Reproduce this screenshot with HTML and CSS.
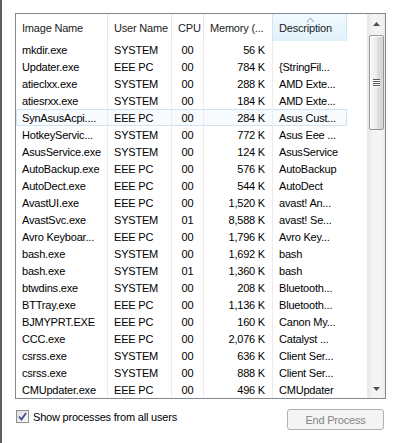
FILE: index.html
```html
<!DOCTYPE html>
<html lang="en">
<head>
    <meta charset="UTF-8">
    <title>Processes</title>
    <link rel="stylesheet" href="styles.css">
</head>
<body>

<div class="frame">
    <div class="list">
        <div class="table">
            <div class="head">
                <div class="hcell">Image Name</div>
                <div class="hcell">User Name</div>
                <div class="hcell">CPU</div>
                <div class="hcell">Memory (...</div>
                <div class="hcell sorted">
                    <svg class="sort-arrow" width="7" height="4" viewBox="0 0 7 4"><path d="M0 4 L3.5 0 L7 4" fill="none" stroke="#8c9bb0" stroke-width="1"/></svg>
                    Description
                </div>
                <div class="hcell filler"></div>
            </div>
            <div class="rows">
                <div class="row"><div class="cell">mkdir.exe</div><div class="cell">SYSTEM</div><div class="cell cpu">00</div><div class="cell mem">56 K</div><div class="cell"></div></div>
                <div class="row"><div class="cell">Updater.exe</div><div class="cell">EEE PC</div><div class="cell cpu">00</div><div class="cell mem">784 K</div><div class="cell">{StringFil...</div></div>
                <div class="row"><div class="cell">atieclxx.exe</div><div class="cell">SYSTEM</div><div class="cell cpu">00</div><div class="cell mem">288 K</div><div class="cell">AMD Exte...</div></div>
                <div class="row"><div class="cell">atiesrxx.exe</div><div class="cell">SYSTEM</div><div class="cell cpu">00</div><div class="cell mem">184 K</div><div class="cell">AMD Exte...</div></div>
                <div class="row selected"><div class="cell">SynAsusAcpi....</div><div class="cell">EEE PC</div><div class="cell cpu">00</div><div class="cell mem">284 K</div><div class="cell">Asus Cust...</div></div>
                <div class="row"><div class="cell">HotkeyServic...</div><div class="cell">SYSTEM</div><div class="cell cpu">00</div><div class="cell mem">772 K</div><div class="cell">Asus Eee ...</div></div>
                <div class="row"><div class="cell">AsusService.exe</div><div class="cell">SYSTEM</div><div class="cell cpu">00</div><div class="cell mem">124 K</div><div class="cell">AsusService</div></div>
                <div class="row"><div class="cell">AutoBackup.exe</div><div class="cell">EEE PC</div><div class="cell cpu">00</div><div class="cell mem">576 K</div><div class="cell">AutoBackup</div></div>
                <div class="row"><div class="cell">AutoDect.exe</div><div class="cell">EEE PC</div><div class="cell cpu">00</div><div class="cell mem">544 K</div><div class="cell">AutoDect</div></div>
                <div class="row"><div class="cell">AvastUI.exe</div><div class="cell">EEE PC</div><div class="cell cpu">00</div><div class="cell mem">1,520 K</div><div class="cell">avast! An...</div></div>
                <div class="row"><div class="cell">AvastSvc.exe</div><div class="cell">SYSTEM</div><div class="cell cpu">01</div><div class="cell mem">8,588 K</div><div class="cell">avast! Se...</div></div>
                <div class="row"><div class="cell">Avro Keyboar...</div><div class="cell">EEE PC</div><div class="cell cpu">00</div><div class="cell mem">1,796 K</div><div class="cell">Avro Key...</div></div>
                <div class="row"><div class="cell">bash.exe</div><div class="cell">SYSTEM</div><div class="cell cpu">00</div><div class="cell mem">1,692 K</div><div class="cell">bash</div></div>
                <div class="row"><div class="cell">bash.exe</div><div class="cell">SYSTEM</div><div class="cell cpu">01</div><div class="cell mem">1,360 K</div><div class="cell">bash</div></div>
                <div class="row"><div class="cell">btwdins.exe</div><div class="cell">SYSTEM</div><div class="cell cpu">00</div><div class="cell mem">208 K</div><div class="cell">Bluetooth...</div></div>
                <div class="row"><div class="cell">BTTray.exe</div><div class="cell">EEE PC</div><div class="cell cpu">00</div><div class="cell mem">1,136 K</div><div class="cell">Bluetooth...</div></div>
                <div class="row"><div class="cell">BJMYPRT.EXE</div><div class="cell">EEE PC</div><div class="cell cpu">00</div><div class="cell mem">160 K</div><div class="cell">Canon My...</div></div>
                <div class="row"><div class="cell">CCC.exe</div><div class="cell">EEE PC</div><div class="cell cpu">00</div><div class="cell mem">2,076 K</div><div class="cell">Catalyst ...</div></div>
                <div class="row"><div class="cell">csrss.exe</div><div class="cell">SYSTEM</div><div class="cell cpu">00</div><div class="cell mem">636 K</div><div class="cell">Client Ser...</div></div>
                <div class="row"><div class="cell">csrss.exe</div><div class="cell">SYSTEM</div><div class="cell cpu">00</div><div class="cell mem">888 K</div><div class="cell">Client Ser...</div></div>
                <div class="row"><div class="cell">CMUpdater.exe</div><div class="cell">EEE PC</div><div class="cell cpu">00</div><div class="cell mem">496 K</div><div class="cell">CMUpdater</div></div>
            </div>
        </div>
        <div class="scrollbar">
            <div class="sb-button">
                <svg width="7" height="4" viewBox="0 0 7 4"><path d="M0 4 L3.5 0 L7 4 Z" fill="#505050"/></svg>
            </div>
            <div class="sb-track">
                <div class="sb-thumb">
                    <span class="grip"></span>
                    <span class="grip"></span>
                    <span class="grip"></span>
                    <span class="grip"></span>
                </div>
            </div>
            <div class="sb-button">
                <svg width="7" height="4" viewBox="0 0 7 4"><path d="M0 0 L7 0 L3.5 4 Z" fill="#505050"/></svg>
            </div>
        </div>
    </div>

    <div class="footer">
        <label class="check">
            <span class="box">
                <svg width="9" height="9" viewBox="0 0 9 9"><path d="M1 4.5 L3.5 7.5 L8 1" fill="none" stroke="#3c4f8c" stroke-width="1.8"/></svg>
            </span>
            Show processes from all users
        </label>
        <button class="end-button" disabled>End Process</button>
    </div>
</div>

</body>
</html>
```

FILE: styles.css
```css
body {
    margin: 0;
    background-color: #fff;
    font-family: "Liberation Sans", Arial, sans-serif;
    font-size: 11px;
    letter-spacing: -0.2px;
    color: #000;
}

.frame {
    height: 443px;
    box-sizing: border-box;
    border-left: 2px solid #5e5e5e;
    padding: 13px 0 0 13px;
}

.list {
    width: 371px;
    height: 386px;
    box-sizing: border-box;
    border: 1px solid #828790;
    display: flex;
}

.table {
    flex: 1;
    overflow: hidden;
}

.head, .row {
    display: grid;
    grid-template-columns: 92px 64px 32px 69px 74px;
}

.head {
    grid-template-columns: 92px 64px 32px 69px 74px 1fr;
    height: 27px;
}

.hcell {
    position: relative;
    display: flex;
    align-items: center;
    padding-left: 6px;
    border-right: 1px solid #e3e6ea;
    color: #1b1b1b;
    white-space: nowrap;
    overflow: hidden;
}

.hcell.sorted {
    background: linear-gradient(#f1f9fe, #e1f2fb);
    border-left: 1px solid #cde7f6;
    border-right: 1px solid #cde7f6;
    margin-left: -1px;
}

.hcell.filler {
    border-right: none;
}

.sort-arrow {
    position: absolute;
    top: 4px;
    left: 34px;
}

.rows {
    width: 331px;
}

.row {
    height: 17px;
}

.row.selected {
    background-color: #f7fbfe;
    box-shadow: inset 0 0 0 1px #cfe3f3;
    border-radius: 2px;
}

.cell {
    display: flex;
    align-items: center;
    padding: 0 6px;
    border-right: 1px solid #ececec;
    white-space: nowrap;
    overflow: hidden;
}

.cell:last-child {
    border-right: none;
}

.cell.cpu {
    justify-content: center;
    padding: 0;
}

.cell.mem {
    justify-content: flex-end;
    padding-right: 7px;
}

.scrollbar {
    width: 17px;
    display: flex;
    flex-direction: column;
    background: linear-gradient(to right, #e8e8e8, #f4f4f4 30%, #f4f4f4 70%, #ececec);
    border-left: 1px solid #ebebeb;
}

.sb-button {
    height: 19px;
    display: flex;
    align-items: center;
    justify-content: center;
}

.sb-track {
    flex: 1;
    padding: 2px 1px 0 1px;
}

.sb-thumb {
    height: 95px;
    box-sizing: border-box;
    border: 1px solid #979797;
    border-radius: 2px;
    background: linear-gradient(to right, #f6f6f6, #ececec 50%, #dedede 51%, #d6d6d6);
    box-shadow: inset 1px 1px 0 #fff;
    display: flex;
    flex-direction: column;
    align-items: center;
    justify-content: center;
    gap: 1px;
}

.grip {
    width: 7px;
    height: 1px;
    background-color: #5b5b5b;
    box-shadow: 0 1px 0 #fff;
}

.footer {
    display: flex;
    justify-content: space-between;
    align-items: flex-start;
    margin-top: 10px;
    width: 371px;
}

.check {
    display: flex;
    align-items: center;
    gap: 4px;
    margin-top: 1px;
    margin-left: 1px;
    font-size: 11px;
}

.box {
    width: 13px;
    height: 13px;
    box-sizing: border-box;
    border: 1px solid #8f8f8f;
    background: linear-gradient(135deg, #dcdcdc, #fbfbfb);
    display: flex;
    align-items: center;
    justify-content: center;
}

.end-button {
    width: 97px;
    height: 21px;
    margin-right: 2px;
    border: 1px solid #adb2b5;
    border-radius: 3px;
    background-color: #f4f4f4;
    color: #838383;
    font-family: "Liberation Sans", Arial, sans-serif;
    font-size: 11px;
    letter-spacing: -0.2px;
    padding: 0;
}
```
